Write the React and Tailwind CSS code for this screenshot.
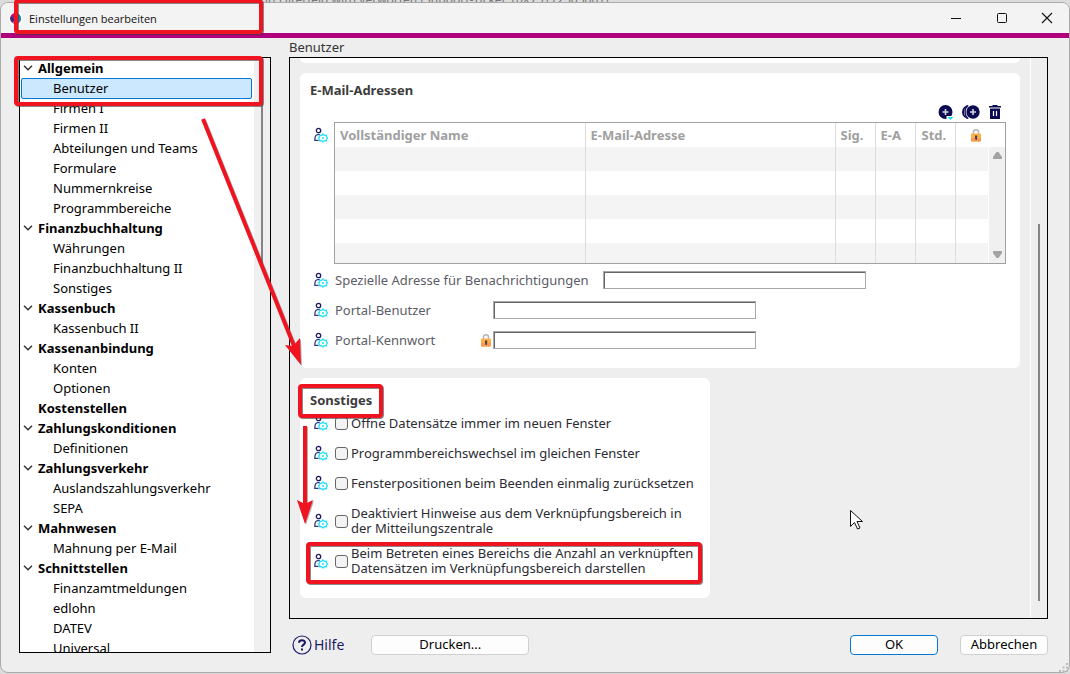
import clsx from "clsx";

const tree = [
  { title: "Allgemein", items: ["Benutzer", "Firmen I", "Firmen II", "Abteilungen und Teams", "Formulare", "Nummernkreise", "Programmbereiche"] },
  { title: "Finanzbuchhaltung", items: ["Währungen", "Finanzbuchhaltung II", "Sonstiges"] },
  { title: "Kassenbuch", items: ["Kassenbuch II"] },
  { title: "Kassenanbindung", items: ["Konten", "Optionen"] },
  { title: "Kostenstellen", items: [] },
  { title: "Zahlungskonditionen", items: ["Definitionen"] },
  { title: "Zahlungsverkehr", items: ["Auslandszahlungsverkehr", "SEPA"] },
  { title: "Mahnwesen", items: ["Mahnung per E-Mail"] },
  { title: "Schnittstellen", items: ["Finanzamtmeldungen", "edlohn", "DATEV", "Universal"] },
];

const windowOptions = [
  { id: "newWindow", lines: ["Öffne Datensätze immer im neuen Fenster"] },
  { id: "sameWindow", lines: ["Programmbereichswechsel im gleichen Fenster"] },
  { id: "resetPositions", lines: ["Fensterpositionen beim Beenden einmalig zurücksetzen"] },
];

const linkOptions = [
  { id: "muteHints", lines: ["Deaktiviert Hinweise aus dem Verknüpfungsbereich in", "der Mitteilungszentrale"] },
  { id: "linkCount", lines: ["Beim Betreten eines Bereichs die Anzahl an verknüpften", "Datensätzen im Verknüpfungsbereich darstellen"] },
];

function UserGearIcon() {
  return (
    <svg width="14" height="16" viewBox="0 0 14 16" fill="none" className="shrink-0">
      <circle cx="4.5" cy="3.5" r="2.2" stroke="#1c1a66" strokeWidth="1.3" />
      <path d="M6 7.600H3.800C1.800 7.600 .8 9.600 .8 13.300H4.600" stroke="#3a3880" strokeWidth="1.3" />
      <path d="M9 7.100l1.300 1.300 2-.1.200 1.700 1 1-1 1-.2 1.700-2-.1L9 14.900l-1.300-1.300-2 .1-.2-1.700-1-1 1-1 .2-1.700 2 .1z" fill="#fff" stroke="#2ce0fa" strokeWidth="1.4" />
      <circle cx="9" cy="11" r="1.1" fill="#2ce0fa" />
    </svg>
  );
}

function LockIcon() {
  return (
    <svg width="10" height="13" viewBox="0 0 10 13" className="shrink-0">
      <path d="M2.5 6V3.3a2.5 2.5 0 0 1 5 0V6" fill="none" stroke="#b5b5be" strokeWidth="1.5" />
      <rect y="4.5" width="10" height="8" rx="1" fill="#fbb048" />
      <path d="M0 9h10v2.5a1 1 0 0 1-1 1H1a1 1 0 0 1-1-1z" fill="#f99a52" />
      <path d="M4 6.5h2.2v2.2l-.5 2.3H4.6L4 8.7z" fill="#4a3f56" />
    </svg>
  );
}

function TitleBar() {
  return (
    <header className="flex h-[35px] shrink-0 items-center border-b-5 border-[#b0007b] bg-[#f3f3f3]">
      <span className="ml-[8px] flex h-[13px] w-[13px] items-center justify-center rounded-sm bg-white">
        <svg width="11" height="11" viewBox="0 0 11 11">
          <path d="M5.5 0A5.5 5.5 0 0 0 .3 3.8L4 5l2-2z" fill="#c4127d" />
          <path d="M.3 3.8A5.5 5.5 0 0 0 2.6 10L5 7 4 4z" fill="#46297f" />
          <path d="M2.6 10a5.5 5.5 0 0 0 6.8-.5L6.5 6z" fill="#e0337c" />
          <path d="M5.5 0a5.5 5.5 0 0 1 3.9 9.5L6.5 6z" fill="#1b86b0" />
          <circle cx="5.5" cy="5.5" r="1.6" fill="#fff" />
        </svg>
      </span>
      <h1 className="ml-[7px] flex-1 font-['Open_Sans',sans-serif] text-[11px] text-[#111]">Einstellungen bearbeiten</h1>
      <button type="button" aria-label="Minimieren" className="flex h-full w-[46px] items-center justify-center">
        <svg width="12" height="12" viewBox="0 0 12 12"><path d="M1 6.5h10" stroke="#111" /></svg>
      </button>
      <button type="button" aria-label="Maximieren" className="flex h-full w-[46px] items-center justify-center">
        <svg width="12" height="12" viewBox="0 0 12 12" fill="none"><rect x="1.5" y="1.5" width="9" height="9" rx="1" stroke="#111" /></svg>
      </button>
      <button type="button" aria-label="Schließen" className="flex h-full w-[44px] items-center justify-center">
        <svg width="12" height="12" viewBox="0 0 12 12"><path d="M1 1l10 10M11 1L1 11" stroke="#111" strokeWidth="1.1" /></svg>
      </button>
    </header>
  );
}

function Sidebar() {
  return (
    <nav aria-label="Einstellungen" className="flex w-[252px] shrink-0 overflow-hidden border border-black bg-white">
      <ul className="min-w-0 flex-1 text-black">
        {tree.map((group) => (
          <li key={group.title}>
            <div className="flex h-5 items-center font-bold">
              <span className="flex w-[18px] justify-center">
                {group.items.length > 0 && (
                  <svg width="10" height="6" viewBox="0 0 10 6" className="mr-[3px]" fill="none">
                    <path d="M1 .7l4 4 4-4" stroke="#333" strokeWidth="1.5" />
                  </svg>
                )}
              </span>
              {group.title}
            </div>
            <ul>
              {group.items.map((item) => (
                <li key={item} className="h-5 pr-[2px] pl-px">
                  <a
                    href="#"
                    className={clsx(
                      "block h-[21px] rounded-xs border pl-[31px] leading-[18px]",
                      item === "Benutzer" ? "border-[#0078d4] bg-[#cce8ff]" : "border-transparent"
                    )}
                  >
                    {item}
                  </a>
                </li>
              ))}
            </ul>
          </li>
        ))}
      </ul>
      <div className="flex w-4 bg-[#f0f0f0] pl-[7px]">
        <div className="h-[206px] w-[2px] bg-[#858585]" />
      </div>
    </nav>
  );
}

function MailTable() {
  return (
    <div className="relative h-[142px] flex-1 overflow-hidden border border-[#a0a0a5]">
      <table className="w-full table-fixed border-collapse">
        <thead>
          <tr className="h-6 text-left text-[#a0a0a0]">
            <th className="w-[250px] border-r border-[#dcdcdc] pl-[5px]">Vollständiger Name</th>
            <th className="w-[250px] border-r border-[#dcdcdc] pl-[5px]">E-Mail-Adresse</th>
            <th className="w-10 border-r border-[#dcdcdc] pl-[5px]">Sig.</th>
            <th className="w-10 border-r border-[#dcdcdc] pl-[5px]">E-A</th>
            <th className="w-10 border-r border-[#dcdcdc] pl-[6px]">Std.</th>
            <th className="pl-[15px]" aria-label="Gesperrt"><LockIcon /></th>
          </tr>
        </thead>
        <tbody>
          {[0, 1, 2, 3, 4].map((row) => (
            <tr key={row} className="h-6 odd:bg-[#f4f4f4]">
              {[0, 1, 2, 3, 4].map((col) => (
                <td key={col} className="border-r border-[#dcdcdc]" />
              ))}
              <td />
            </tr>
          ))}
        </tbody>
      </table>
      <div className="absolute right-0 top-6 bottom-0 flex w-[17px] flex-col items-center justify-between border-l border-white bg-[#f0f0f0] py-[5px]">
        <svg width="9" height="7" viewBox="0 0 9 7"><path d="M3.5 0h2L9 5v2H0V5z" fill="#a3a3a3" /></svg>
        <svg width="9" height="7" viewBox="0 0 9 7"><path d="M3.5 7h2L9 2V0H0v2z" fill="#a3a3a3" /></svg>
      </div>
    </div>
  );
}

function TableTools() {
  return (
    <div className="mr-[18px] flex justify-end gap-2">
      <button type="button" aria-label="Hinzufügen">
        <svg width="16" height="16" viewBox="0 0 16 16">
          <circle cx="7.500" cy="7" r="7" fill="#0c0a50" />
          <path d="M7.500 4v6M4.500 7h6" stroke="#d5d5e5" strokeWidth="1.6" />
          <path d="M8.500 11h7.500v5H8.500z" fill="#fff" />
          <path d="M9.500 12h6l-3 3z" fill="#10e0fb" />
        </svg>
      </button>
      <button type="button" aria-label="Duplizieren">
        <svg width="18" height="16" viewBox="0 0 18 16">
          <circle cx="7" cy="7" r="7" fill="#0c0a50" />
          <circle cx="9.500" cy="7" r="7.600" fill="#fff" />
          <path d="M6.200 .5C2 3.500 2 10.500 6.200 13.500" fill="none" stroke="#0c0a50" strokeWidth="1.400" />
          <circle cx="11" cy="7" r="6.700" fill="#0c0a50" />
          <path d="M11 4v6M8 7h6" stroke="#d5d5e5" strokeWidth="1.6" />
        </svg>
      </button>
      <button type="button" aria-label="Löschen">
        <svg width="14" height="16" viewBox="0 0 14 16">
          <path d="M1 1h3.500V0h5v1H13v1.500H1zM2 3.500h10V14H2z" fill="#0c0a50" />
          <path d="M5.500 6v5M8.500 6v5" stroke="#fff" strokeWidth="1.2" />
        </svg>
      </button>
    </div>
  );
}

function TextRow({ id, label, wide, locked }) {
  return (
    <div className="flex h-[30px] items-center">
      <UserGearIcon />
      <label htmlFor={id} className={clsx("ml-[7px] text-[#5c5c66]", wide ? "w-[268px]" : "w-[146px]")}>{label}</label>
      <span className={clsx("flex", wide ? "w-0" : "w-3")}>{locked && <LockIcon />}</span>
      <input
        id={id}
        type={locked ? "password" : "text"}
        className="h-[18px] w-[263px] border border-[#a8a8ac] bg-white px-1 shadow-[inset_1px_1px_0_#666] outline-none"
      />
    </div>
  );
}

function OptionRow({ option }) {
  return (
    <div className={clsx("flex items-center", option.lines.length > 1 ? "h-10" : "h-[30px]")}>
      <UserGearIcon />
      <input
        id={option.id}
        type="checkbox"
        className="ml-[7px] h-[13px] w-[13px] shrink-0 appearance-none rounded-[3px] border border-[#666] bg-[#f3f3f3]"
      />
      <label htmlFor={option.id} className="ml-[3px] whitespace-nowrap text-[#2b2b33]">
        {option.lines.map((line) => (
          <span key={line} className="block">{line}</span>
        ))}
      </label>
    </div>
  );
}

function Annotations() {
  return (
    <svg width="1070" height="674" className="pointer-events-none absolute top-0 left-0" fill="none">
      <g className="drop-shadow-[1px_1px_0_rgba(60,60,60,0.6)]" stroke="#f01420" strokeWidth="4">
        <rect x="16" y="1" width="245" height="31" rx="2" />
        <rect x="16" y="58" width="245" height="46" rx="2" />
        <rect x="300" y="386" width="81" height="30" rx="2" />
        <rect x="308" y="544" width="392" height="38" rx="2" />
      </g>
      <g className="drop-shadow-[1px_1px_0_rgba(60,60,60,0.4)]">
        <path d="M203 119L294 346M305 426V505" stroke="#f01420" strokeWidth="4" />
        <path d="M301 365L285 345l8 1 7-8z" fill="#f01420" />
        <path d="M305 524l-8-24 8 4 8-4z" fill="#f01420" />
      </g>
      <path d="M850.5 510.500v16l4-4 3 6.500 2.500-1-3-6.500h5.500z" fill="#fff" stroke="#111" />
    </svg>
  );
}

export default function App() {
  return (
    <div className="relative flex h-screen min-h-[600px] flex-col overflow-hidden bg-[#dcdcdc] font-['Noto_Sans',sans-serif] text-[13px] leading-[15px]">
      <div className="flex h-[2px] shrink-0 items-end overflow-hidden pl-[265px] text-xs leading-[5px] text-[#777]">
        in Filterfeld wird verworfen [Support-Ticket 10X751T2505001]
      </div>
      <div className="flex min-h-0 flex-1 flex-col overflow-hidden rounded-lg border border-[#aaa] bg-[#eee]">
        <TitleBar />
        <div className="flex min-h-0 flex-1">
          <div className="flex pt-[19px] pb-[19px] pl-[18px]">
            <Sidebar />
          </div>
          <main className="ml-[18px] flex min-w-0 flex-1 flex-col pr-[21px]">
            <h2 className="flex h-[19px] shrink-0 items-center text-[#333]">Benutzer</h2>
            <div className="flex min-h-0 flex-1 overflow-hidden border border-black">
              <div className="min-w-0 flex-1 border-r border-white pr-[10px] pl-[10px]">
                <div className="h-[5px] rounded-b-md bg-white" />

                <section className="mt-[10px] rounded-md bg-white pt-[10px] pb-[13px]">
                  <h3 className="pl-[10px] font-bold text-[#3c3c3c]">E-Mail-Adressen</h3>
                  <div className="pt-[7px]">
                    <TableTools />
                  </div>
                  <div className="mt-px flex pr-[14px] pl-[14px]">
                    <div className="w-5 pt-[5px]"><UserGearIcon /></div>
                    <MailTable />
                  </div>
                  <div className="mt-px pl-[14px]">
                    <TextRow id="notify" label="Spezielle Adresse für Benachrichtigungen" wide />
                    <TextRow id="portalUser" label="Portal-Benutzer" />
                    <TextRow id="portalPassword" label="Portal-Kennwort" locked />
                  </div>
                </section>

                <section className="mt-[10px] w-[410px] rounded-md bg-white pt-[15px] pb-[17px]">
                  <h3 className="pl-[10px] font-bold text-[#3c3c3c]">Sonstiges</h3>
                  <div className="flex flex-col gap-[3px] pl-[14px]">
                    <div>
                      {windowOptions.map((option) => (
                        <OptionRow key={option.id} option={option} />
                      ))}
                    </div>
                    <div>
                      {linkOptions.map((option) => (
                        <OptionRow key={option.id} option={option} />
                      ))}
                    </div>
                  </div>
                </section>
              </div>
              <div className="flex w-4 items-end pb-[17px] pl-[7px]">
                <div className="h-[377px] w-[2px] bg-[#858585]" />
              </div>
            </div>

            <footer className="flex h-[53px] shrink-0 items-center pb-[2px] text-black">
              <a href="#" className="ml-[3px] flex items-center gap-[2px] text-sm text-[#1c1a66]">
                <svg width="20" height="20" viewBox="0 0 20 20" fill="none">
                  <circle cx="10" cy="10" r="9" stroke="#1c1a66" strokeWidth="1.2" />
                  <path d="M7 7.800C7 4.500 13 4.500 13 7.600 13 9.600 10 9.600 10 12" stroke="#1c1a66" strokeWidth="2" />
                  <path d="M9 13.500h2v2H9z" fill="#1c1a66" />
                </svg>
                Hilfe
              </a>
              <button type="button" className="ml-[27px] h-5 w-[158px] rounded-sm border border-[#d0d0d0] bg-[#fdfdfd]">Drucken...</button>
              <button type="button" className="ml-auto h-5 w-[88px] rounded-sm border border-[#0078d4] bg-[#fdfdfd]">OK</button>
              <button type="button" className="ml-[22px] h-5 w-[88px] rounded-sm border border-[#d0d0d0] bg-[#fdfdfd]">Abbrechen</button>
            </footer>
          </main>
        </div>
      </div>
      <div className="h-px shrink-0" />
      <svg width="9" height="9" viewBox="0 0 9 9" className="absolute right-[2px] bottom-[2px]" fill="#bbb">
        <path d="M7 0h2v2H7zM3.500 3.500h2v2h-2zM7 3.500h2v2H7zM0 7h2v2H0zM3.500 7h2v2h-2zM7 7h2v2H7z" />
      </svg>
      <Annotations />
    </div>
  );
}
